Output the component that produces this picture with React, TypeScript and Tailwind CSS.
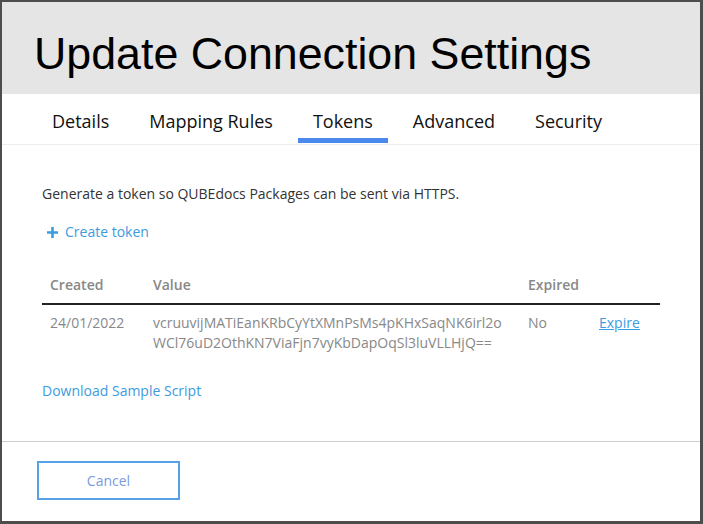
import React from 'react';

const tabs = ['Details', 'Mapping Rules', 'Tokens', 'Advanced', 'Security'];

function PlusIcon() {
  return (
    <svg width="11" height="11" viewBox="0 0 11 11" className="shrink-0">
      <path d="M5.5 0v11M0 5.5h11" stroke="#3d9be0" strokeWidth="2.6" />
    </svg>
  );
}

export default function App() {
  return (
    <div className="w-[703px] h-[524px] bg-[#4d4d4d] pt-[2px] pl-[2px] pr-[3px] pb-[3px] font-['Open_Sans',sans-serif]">
      <div className="h-full bg-white flex flex-col">
        {/* Header */}
        <div className="h-[92px] bg-[#e5e5e5] pl-[32px] pt-[25px] shrink-0">
          <h1 className="font-['Liberation_Sans',Arial,sans-serif] text-[44.75px] leading-[52px] text-black">
            Update Connection Settings
          </h1>
        </div>

        {/* Tabs */}
        <div className="h-[51px] border-b border-[#ececec] flex pl-[35px] gap-[10px] shrink-0">
          {tabs.map((t) => (
            <div
              key={t}
              className={
                t === 'Tokens'
                  ? 'h-[49px] px-[15px] pt-[15px] text-[18px] leading-[24px] text-[#111] border-b-[5px] border-[#4a89ee]'
                  : 'h-[49px] px-[15px] pt-[15px] text-[18px] leading-[24px] text-[#111]'
              }
            >
              {t}
            </div>
          ))}
        </div>

        {/* Content */}
        <div className="flex-1 pl-[40px] pr-[40px] text-[14px] leading-[20px]">
          <p className="mt-[39px] text-[#333]">
            Generate a token so QUBEdocs Packages can be sent via HTTPS.
          </p>

          <button className="mt-[18px] flex items-center gap-[7px] pl-[5px] text-[#3d9be0]">
            <PlusIcon />
            <span>Create token</span>
          </button>

          <table className="mt-[25px] w-[618px] table-fixed border-collapse">
            <colgroup>
              <col className="w-[103px]" />
              <col className="w-[375px]" />
              <col className="w-[71px]" />
              <col className="w-[69px]" />
            </colgroup>
            <thead>
              <tr className="border-b-2 border-[#222]">
                <th className="text-left font-semibold text-[#888] px-[8px] pt-[8px] pb-[8px]">Created</th>
                <th className="text-left font-semibold text-[#888] px-[8px] pt-[8px] pb-[8px]">Value</th>
                <th className="text-left font-semibold text-[#888] px-[8px] pt-[8px] pb-[8px]">Expired</th>
                <th className="px-[8px]"></th>
              </tr>
            </thead>
            <tbody>
              <tr className="align-top text-[#888]">
                <td className="px-[8px] pt-[8px] pb-[8px]">24/01/2022</td>
                <td className="px-[8px] pt-[8px] pb-[8px]">
                  <span className="block">vcruuvijMATiEanKRbCyYtXMnPsMs4pKHxSaqNK6irl2o</span>
                  <span className="block">WCl76uD2OthKN7ViaFjn7vyKbDapOqSl3luVLLHjQ==</span>
                </td>
                <td className="px-[8px] pt-[8px] pb-[8px]">No</td>
                <td className="px-[8px] pt-[8px] pb-[8px]">
                  <a href="#" className="text-[#3d9be0] underline">
                    Expire
                  </a>
                </td>
              </tr>
            </tbody>
          </table>

          <a href="#" className="block mt-[20px] text-[#3d9be0]">
            Download Sample Script
          </a>
        </div>

        {/* Footer */}
        <div className="h-[80px] border-t border-[#cccccc] pl-[35px] pt-[19px] shrink-0">
          <button className="w-[143px] h-[39px] border-2 border-[#55a3e6] text-[14px] text-[#7a9ae0]">
            Cancel
          </button>
        </div>
      </div>
    </div>
  );
}
